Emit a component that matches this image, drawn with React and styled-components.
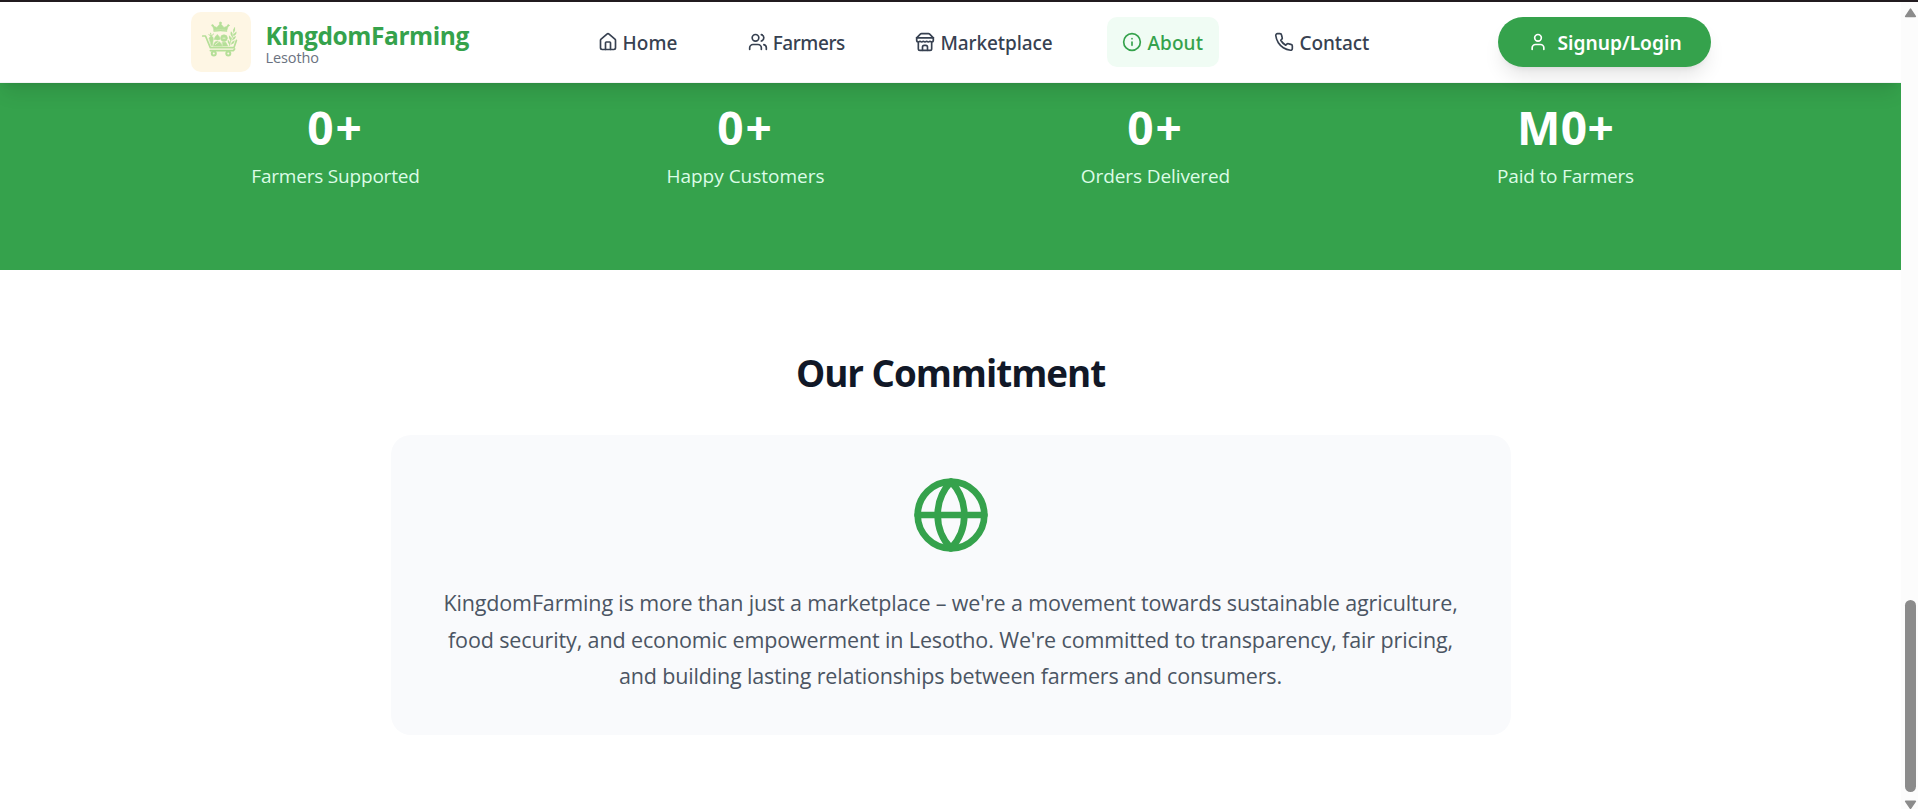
import React from 'react';
import styled, { createGlobalStyle, css } from 'styled-components';

const GREEN = '#35a24c';

const GlobalStyle = createGlobalStyle`
  * { box-sizing: border-box; }
  body {
    margin: 0;
    background: #fff;
    font-family: 'Open Sans', 'Noto Sans', sans-serif;
    overflow: hidden;
  }
  h2, p { margin: 0; }
`;

const Window = styled.div`
  height: 809px;
  display: flex;
  flex-direction: column;
  border-top: 2px solid #211b1f;
  overflow: hidden;
`;

const Viewport = styled.div`
  flex: 1;
  display: flex;
  min-height: 0;
`;

const Page = styled.div`
  width: 1901px;
  flex: none;
  overflow: hidden;
`;

const Header = styled.header`
  position: relative;
  z-index: 2;
  height: 81px;
  background: #fff;
  border-bottom: 1px solid #f3f4f6;
  box-shadow: 0 12.5px 18.75px -3.75px rgba(0, 0, 0, 0.1),
    0 5px 7.5px -5px rgba(0, 0, 0, 0.1);
`;

const HeaderInner = styled.div`
  width: 1520px;
  height: 80px;
  margin: 0 auto;
  display: flex;
  align-items: center;
  justify-content: space-between;
`;

const Brand = styled.div`
  width: 392px;
  display: flex;
  align-items: center;
  gap: 15px;
`;

const LogoTile = styled.div`
  width: 60px;
  height: 60px;
  flex: none;
  border-radius: 10px;
  background: #fef6e4;
  overflow: hidden;
  svg { display: block; }
`;

const BrandText = styled.div`
  margin-top: 2px;
  white-space: nowrap;
`;

const BrandName = styled.div`
  color: ${GREEN};
  font-size: 24.5px;
  line-height: 28px;
  font-weight: 700;
  letter-spacing: -0.42px;
`;

const BrandPlace = styled.div`
  color: #6b7280;
  font-size: 14.5px;
  line-height: 15px;
  letter-spacing: -0.1px;
`;

const Nav = styled.nav`
  flex: 1;
  display: flex;
  gap: 40px;
`;

const NavItem = styled.a`
  height: 50px;
  display: flex;
  align-items: center;
  gap: 5px;
  padding: 0 15px;
  border-radius: 10px;
  color: #374151;
  ${(p) => p.$active && css`
    color: ${GREEN};
    background: #f0fcf4;
  `}
`;

const NavLabel = styled.span`
  width: ${(p) => p.$width}px;
  margin-top: 2px;
  font-family: 'Noto Sans', sans-serif;
  font-size: 19px;
  line-height: 30px;
  font-weight: 500;
  letter-spacing: ${(p) => p.$tracking}px;
  white-space: nowrap;
`;

const LoginButton = styled.button`
  width: 213px;
  height: 50px;
  flex: none;
  display: flex;
  align-items: center;
  gap: 10px;
  padding: 0 0 0 30px;
  border: 0;
  border-radius: 25px;
  background: ${GREEN};
  color: #fff;
  font: 600 19.2px/30px 'Noto Sans', sans-serif;
  white-space: nowrap;
  box-shadow: 0 12.5px 18.75px -3.75px rgba(0, 0, 0, 0.1),
    0 5px 7.5px -5px rgba(0, 0, 0, 0.1);
`;

const LoginLabel = styled.span`
  margin-top: 2px;
`;

const Stats = styled.section`
  height: 187px;
  padding-top: 19px;
  background: ${GREEN};
`;

const StatsGrid = styled.div`
  width: 1600px;
  margin: 0 auto;
  display: grid;
  grid-template-columns: repeat(4, 1fr);
  gap: 40px;
  text-align: center;
`;

const StatNumber = styled.div`
  color: #fff;
  font-size: 46px;
  line-height: 50px;
  font-weight: 700;
  letter-spacing: ${(p) => p.$tracking}px;
`;

const StatLabel = styled.div`
  margin-top: 9px;
  color: #dcfce7;
  font-size: 19px;
  line-height: 30px;
  letter-spacing: ${(p) => p.$tracking}px;
`;

const Commitment = styled.section`
  padding: 81px 0 80px;
  display: flex;
  flex-direction: column;
  align-items: center;
`;

const Title = styled.h2`
  color: #111827;
  font-size: 36.8px;
  line-height: 45px;
  font-weight: 700;
  letter-spacing: -1.02px;
`;

const Card = styled.div`
  width: 1120px;
  height: 300px;
  margin-top: 39px;
  padding-top: 40px;
  display: flex;
  flex-direction: column;
  align-items: center;
  border-radius: 20px;
  background: #f9fafc;
`;

const Statement = styled.p`
  margin-top: 30px;
  color: #4b5563;
  font-size: 21.5px;
  line-height: 36.56px;
  text-align: center;
`;

const Line = styled.span`
  display: block;
  white-space: nowrap;
  letter-spacing: ${(p) => p.$tracking}px;
`;

const Scrollbar = styled.div`
  width: 17px;
  flex: none;
  padding: 6px 0 0 3px;
  display: flex;
  flex-direction: column;
  background: #fcfcfc;
`;

const Arrow = styled.svg`
  display: block;
  flex: none;
`;

const Thumb = styled.div`
  width: 11px;
  height: 192px;
  margin: 582px 0 8px 1px;
  flex: none;
  border-radius: 6px;
  background: #8b8b8b;
`;

const IconSvg = styled.svg`
  width: 20px;
  height: 20px;
  flex: none;
`;

const Icon = ({ children }) => (
  <IconSvg viewBox="0 0 24 24" fill="none" stroke="currentColor"
    strokeWidth="2" strokeLinecap="round" strokeLinejoin="round">
    {children}
  </IconSvg>
);

const HomeIcon = () => (
  <Icon>
    <path d="M15 21v-8a1 1 0 0 0-1-1h-4a1 1 0 0 0-1 1v8" />
    <path d="M3 10a2 2 0 0 1 .709-1.528l7-5.999a2 2 0 0 1 2.582 0l7 5.999A2 2 0 0 1 21 10v9a2 2 0 0 1-2 2H5a2 2 0 0 1-2-2z" />
  </Icon>
);

const UsersIcon = () => (
  <Icon>
    <path d="M16 21v-2a4 4 0 0 0-4-4H6a4 4 0 0 0-4 4v2" />
    <circle cx="9" cy="7" r="4" />
    <path d="M22 21v-2a4 4 0 0 0-3-3.87" />
    <path d="M16 3.13a4 4 0 0 1 0 7.75" />
  </Icon>
);

const StoreIcon = () => (
  <Icon>
    <path d="m2 7 4.41-4.41A2 2 0 0 1 7.83 2h8.34a2 2 0 0 1 1.42.59L22 7" />
    <path d="M4 12v8a2 2 0 0 0 2 2h12a2 2 0 0 0 2-2v-8" />
    <path d="M15 22v-4a2 2 0 0 0-2-2h-2a2 2 0 0 0-2 2v4" />
    <path d="M2 7h20" />
    <path d="M22 7v3a2 2 0 0 1-2 2a2.7 2.7 0 0 1-1.59-.63.7.7 0 0 0-.82 0A2.7 2.7 0 0 1 16 12a2.7 2.7 0 0 1-1.59-.63.7.7 0 0 0-.82 0A2.7 2.7 0 0 1 12 12a2.7 2.7 0 0 1-1.59-.63.7.7 0 0 0-.82 0A2.7 2.7 0 0 1 8 12a2.7 2.7 0 0 1-1.59-.63.7.7 0 0 0-.82 0A2.7 2.7 0 0 1 4 12a2 2 0 0 1-2-2V7" />
  </Icon>
);

const InfoIcon = () => (
  <Icon>
    <circle cx="12" cy="12" r="10" />
    <path d="M12 16v-4" />
    <path d="M12 8h.01" />
  </Icon>
);

const PhoneIcon = () => (
  <Icon>
    <path d="M22 16.92v3a2 2 0 0 1-2.18 2 19.79 19.79 0 0 1-8.63-3.07 19.5 19.5 0 0 1-6-6 19.79 19.79 0 0 1-3.07-8.67A2 2 0 0 1 4.11 2h3a2 2 0 0 1 2 1.72 12.84 12.84 0 0 0 .7 2.81 2 2 0 0 1-.45 2.11L8.09 9.91a16 16 0 0 0 6 6l1.27-1.27a2 2 0 0 1 2.11-.45 12.84 12.84 0 0 0 2.81.7A2 2 0 0 1 22 16.92z" />
  </Icon>
);

const UserIcon = () => (
  <Icon>
    <path d="M19 21v-2a4 4 0 0 0-4-4H9a4 4 0 0 0-4 4v2" />
    <circle cx="12" cy="7" r="4" />
  </Icon>
);

const GlobeIcon = styled.svg`
  display: block;
  width: 80px;
  height: 80px;
  color: ${GREEN};
`;

const Logo = () => (
  <svg width="60" height="60" viewBox="0 0 60 60" fill="none" stroke="#b5df98" strokeLinecap="round" strokeLinejoin="round">
    <g fill="#b5df98" strokeWidth=".5">
      <path d="M22.9 18 21.5 13.6 25.8 15.4 29.4 11.4 33 15.4 37.3 13.6 36 18Q29.4 16.8 22.9 18Z" />
      <path d="M23 18.5Q29.4 17.3 36 18.5V19.4Q29.4 18.5 23 19.4Z" />
      <circle cx="29.4" cy="11" r="1.1" />
      <circle cx="21.5" cy="13.4" r=".9" />
      <circle cx="37.4" cy="13.4" r=".9" />
      <path d="M18.2 26.2Q18.8 24.2 20.4 24.2Q22.4 24.5 22.3 27L21.4 33.8H20.4Z" />
      <path d="M23.4 27.2Q23.3 25 26.3 22.4Q29.3 25 29.2 27.2Q27 28.6 23.4 27.2Z" />
      <path d="M22.4 34Q23 29.4 26.2 29.2Q29.8 29.2 31 34Z" />
      <circle cx="33" cy="26.1" r="3.4" />
      <path d="M31.4 30.2H34.8L36.8 34H31.6Z" />
    </g>
    <path d="M20.3 24.2 19.6 21.2M20.4 24 22.6 22M20 24 17.9 22.7" strokeWidth="1" />
    <path d="M24.3 32.5 27.7 29.8M32 26.2H34" stroke="#fef6e4" strokeWidth=".7" />
    <path d="M11.7 24H14.5L19.3 35.6H43L45.4 28.4" strokeWidth="1.7" />
    <path d="M19.4 38.6H42.5L43.6 37" strokeWidth="1.7" />
    <circle cx="22.8" cy="41.6" r="2" strokeWidth="2" />
    <circle cx="37.3" cy="41.6" r="2" strokeWidth="2" />
    <path d="M38.3 33.6Q39.7 27.5 42.6 22" strokeWidth=".8" />
    <g fill="#b5df98" strokeWidth=".2">
      <path d="M42.4 20.8Q41.4 17.8 43.7 15Q44.8 18.4 42.4 20.8Z" />
      <path d="M41.2 24.8Q38.8 22.4 40 19.6Q42.4 21.6 41.2 24.8Z" />
      <path d="M42.5 24Q42.8 20.7 45.4 19.7Q45.7 22.7 42.5 24Z" />
      <path d="M39.9 28.8Q37.3 26.6 38.3 23.6Q40.8 25.4 39.9 28.8Z" />
      <path d="M41.1 28.2Q41.6 25 44.7 24Q44.6 27.2 41.1 28.2Z" />
      <path d="M38.9 32.8Q36.3 31 36.9 28Q39.3 29.4 38.9 32.8Z" />
      <path d="M39.9 32.6Q40.4 29.4 43.5 28.4Q43.4 31.6 39.9 32.6Z" />
    </g>
  </svg>
);

const navItems = [
  { label: 'Home', icon: HomeIcon, width: 55.2, tracking: 0.1 },
  { label: 'Farmers', icon: UsersIcon, width: 72.8, tracking: -0.42 },
  { label: 'Marketplace', icon: StoreIcon, width: 112, tracking: -0.1 },
  { label: 'About', icon: InfoIcon, width: 57, tracking: 0.1, active: true },
  { label: 'Contact', icon: PhoneIcon, width: 71.5, tracking: -0.1 },
];

const stats = [
  { value: '0+', label: 'Farmers Supported', valueTracking: 2, labelTracking: -0.2 },
  { value: '0+', label: 'Happy Customers', valueTracking: 2, labelTracking: 0 },
  { value: '0+', label: 'Orders Delivered', valueTracking: 2, labelTracking: -0.1 },
  { value: 'M0+', label: 'Paid to Farmers', valueTracking: 0.4, labelTracking: -0.18 },
];

export default function App() {
  return (
    <Window>
      <GlobalStyle />
      <Viewport>
        <Page>
          <Header>
            <HeaderInner>
              <Brand>
                <LogoTile><Logo /></LogoTile>
                <BrandText>
                  <BrandName>KingdomFarming</BrandName>
                  <BrandPlace>Lesotho</BrandPlace>
                </BrandText>
              </Brand>
              <Nav>
                {navItems.map(({ label, icon: ItemIcon, width, tracking, active }) => (
                  <NavItem key={label} $active={active}>
                    <ItemIcon />
                    <NavLabel $width={width} $tracking={tracking}>{label}</NavLabel>
                  </NavItem>
                ))}
              </Nav>
              <LoginButton>
                <UserIcon />
                <LoginLabel>Signup/Login</LoginLabel>
              </LoginButton>
            </HeaderInner>
          </Header>
          <Stats>
            <StatsGrid>
              {stats.map((s) => (
                <div key={s.label}>
                  <StatNumber $tracking={s.valueTracking}>{s.value}</StatNumber>
                  <StatLabel $tracking={s.labelTracking}>{s.label}</StatLabel>
                </div>
              ))}
            </StatsGrid>
          </Stats>
          <Commitment>
            <Title>Our Commitment</Title>
            <Card>
              <GlobeIcon viewBox="0 0 24 24" fill="none" stroke="currentColor"
                strokeWidth="2" strokeLinecap="round" strokeLinejoin="round">
                <circle cx="12" cy="12" r="10" />
                <path d="M12 2a14.5 14.5 0 0 0 0 20 14.5 14.5 0 0 0 0-20" />
                <path d="M2 12h20" />
              </GlobeIcon>
              <Statement>
                <Line $tracking={-0.14}>KingdomFarming is more than just a marketplace – we're a movement towards sustainable agriculture, </Line>
                <Line $tracking={-0.125}>food security, and economic empowerment in Lesotho. We're committed to transparency, fair pricing, </Line>
                <Line $tracking={-0.17}>and building lasting relationships between farmers and consumers.</Line>
              </Statement>
            </Card>
          </Commitment>
        </Page>
        <Scrollbar>
          <Arrow width="13" height="10" viewBox="0 0 13 10">
            <path d="M6.5 1.2 11.3 8.4H1.7Z" fill="#8b8b8b" stroke="#8b8b8b" strokeWidth="1.6" strokeLinejoin="round" />
          </Arrow>
          <Thumb />
          <Arrow width="13" height="10" viewBox="0 0 13 10">
            <path d="M6.5 8.4 11.3 1.4H1.7Z" fill="#8b8b8b" stroke="#8b8b8b" strokeWidth="1.6" strokeLinejoin="round" />
          </Arrow>
        </Scrollbar>
      </Viewport>
    </Window>
  );
}
